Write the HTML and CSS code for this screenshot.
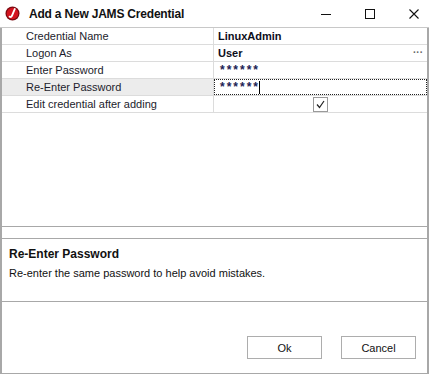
FILE: index.html
```html
<!DOCTYPE html>
<html>
<head>
<meta charset="utf-8">
<link rel="stylesheet" href="styles.css">
</head>
<body>
<div class="window">
  <div class="titlebar">
    <svg class="appicon" width="15" height="15" viewBox="0 0 15 15">
      <circle cx="7.5" cy="7.5" r="7" fill="#7a0a10"/>
      <circle cx="7.5" cy="7.5" r="5.8" fill="#d4141f"/>
      <path d="M9.8 3 L6.9 9.8 Q6.2 11.4 4.6 10.7" stroke="#fff" stroke-width="1.9" fill="none" stroke-linecap="round"/>
    </svg>
    <span class="title">Add a New JAMS Credential</span>
    <div class="controls">
      <svg class="ctl" width="12" height="12" viewBox="0 0 12 12"><path d="M1 6.5 H11" stroke="#111" stroke-width="1"/></svg>
      <svg class="ctl" width="12" height="12" viewBox="0 0 12 12"><rect x="1.5" y="1.5" width="9" height="9" fill="none" stroke="#111" stroke-width="1"/></svg>
      <svg class="ctl" width="12" height="12" viewBox="0 0 12 12"><path d="M1.5 1.5 L10.5 10.5 M10.5 1.5 L1.5 10.5" stroke="#111" stroke-width="1.1"/></svg>
    </div>
  </div>
  <div class="grid">
    <div class="row">
      <div class="label">Credential Name</div>
      <div class="value bold">LinuxAdmin</div>
    </div>
    <div class="row">
      <div class="label">Logon As</div>
      <div class="value bold">User<span class="dots">&middot;&middot;&middot;</span></div>
    </div>
    <div class="row">
      <div class="label">Enter Password</div>
      <div class="value stars">******</div>
    </div>
    <div class="row active">
      <div class="label">Re-Enter Password</div>
      <div class="value stars focus">******<span class="caret"></span></div>
    </div>
    <div class="row">
      <div class="label">Edit credential after adding</div>
      <div class="value center"><span class="check"><svg width="11" height="11" viewBox="0 0 11 11"><path d="M2 5.5 L4.5 8.5 L9 2" stroke="#222" stroke-width="1.2" fill="none"/></svg></span></div>
    </div>
  </div>
  <div class="splitter"></div>
  <div class="desc">
    <div class="desc-title">Re-Enter Password</div>
    <div class="desc-text">Re-enter the same password to help avoid mistakes.</div>
  </div>
  <div class="footer">
    <button class="btn">Ok</button>
    <button class="btn">Cancel</button>
  </div>
</div>
</body>
</html>
```
FILE: styles.css
```css
html, body {
  margin: 0;
  padding: 0;
  background: #fff;
}
body {
  font-family: "Liberation Sans", Arial, sans-serif;
  font-size: 11px;
  color: #1c1c2c;
}
.window {
  width: 429px;
  height: 374px;
  box-sizing: border-box;
  border-left: 2px solid #a8a8a8;
  border-right: 2px solid #a8a8a8;
  border-bottom: 1px solid #a8a8a8;
  display: flex;
  flex-direction: column;
  background: #fff;
}
.titlebar {
  height: 28px;
  flex: none;
  display: flex;
  align-items: center;
  border-bottom: 1px solid #c8c8c8;
  box-sizing: border-box;
  margin-left: -2px;
  margin-right: -2px;
  padding-left: 5px;
  background: #fff;
}
.appicon {
  flex: none;
  margin-right: 9px;
}
.title {
  font-weight: bold;
  font-size: 12px;
  color: #111;
  flex: 1;
  letter-spacing: -0.2px;
}
.controls {
  display: flex;
  height: 100%;
  align-items: center;
}
.ctl {
  margin: 0 16px;
}
.ctl:last-child {
  margin-right: 9px;
}
.grid {
  height: 199px;
  flex: none;
  border-bottom: 1px solid #a8a8a8;
  box-sizing: border-box;
}
.row {
  display: flex;
  height: 17px;
  border-bottom: 1px solid #dcdcdc;
  box-sizing: border-box;
}
.label {
  width: 212px;
  flex: none;
  padding-left: 24px;
  box-sizing: border-box;
  border-right: 1px solid #dcdcdc;
  line-height: 16px;
  white-space: nowrap;
}
.row.active .label {
  background: #ececec;
}
.value {
  flex: 1;
  padding-left: 4px;
  line-height: 16px;
  position: relative;
  display: flex;
  align-items: center;
}
.bold {
  font-weight: bold;
  color: #0d0d1a;
}
.dots {
  margin-left: auto;
  margin-right: 4px;
  font-weight: bold;
  color: #666;
  font-size: 10px;
}
.stars {
  font-weight: bold;
  font-size: 12px;
  color: #1d1d55;
  letter-spacing: 2px;
  padding-left: 6px;
}
.focus {
  outline: 1px dotted #222;
  outline-offset: -1px;
}
.caret {
  display: inline-block;
  width: 1px;
  height: 13px;
  background: #000;
  margin-left: -1px;
}
.center {
  justify-content: center;
  padding-left: 0;
}
.check {
  width: 13px;
  height: 13px;
  border: 1px solid #9a9a9a;
  display: flex;
  align-items: center;
  justify-content: center;
  background: #fff;
}
.splitter {
  height: 11px;
  flex: none;
  border-bottom: 1px solid #a8a8a8;
}
.desc {
  height: 63px;
  flex: none;
  box-sizing: border-box;
  border-bottom: 1px solid #a8a8a8;
  padding: 8px 0 0 7px;
}
.desc-title {
  font-weight: bold;
  font-size: 12px;
  color: #111;
  margin-bottom: 6px;
}
.desc-text {
  color: #111;
}
.footer {
  flex: 1;
  display: flex;
  justify-content: flex-end;
  align-items: flex-start;
  padding-top: 34px;
  padding-right: 11px;
  gap: 19px;
}
.btn {
  width: 75px;
  height: 23px;
  background: #fff;
  border: 1px solid #adadad;
  font-family: "Liberation Sans", Arial, sans-serif;
  font-size: 11px;
  color: #111;
  padding: 0;
}
```
